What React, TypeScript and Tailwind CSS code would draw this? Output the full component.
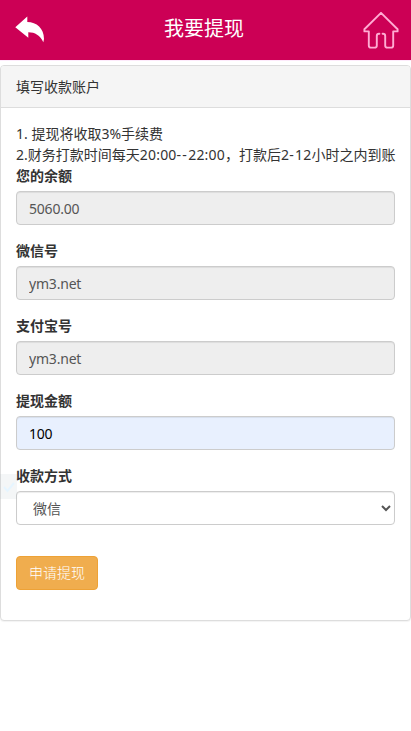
import { useState } from 'react';
import type { ReactNode } from 'react';
import clsx from 'clsx';

interface FieldProps {
  label: string;
  children: ReactNode;
}

interface TextFieldProps {
  label: string;
  value: string;
  readOnly?: boolean;
  onChange?: (value: string) => void;
}

const CONTROL =
  'block h-[34px] w-full rounded border border-[#ccc] text-sm shadow-[inset_0_1px_1px_rgba(0,0,0,0.075)] outline-none';

function BackIcon() {
  return (
    <svg className="h-7 w-[30px]" viewBox="0 0 30 28" fill="#fff">
      <path d="M.3 11.2 12.3 .6V6C21.6 6.1 29 12.2 29 22.9L28.3 26.2C25.2 19.4 19.6 16.2 13.3 16.3V21.8Z" />
    </svg>
  );
}

function HomeIcon() {
  return (
    <svg
      className="h-[38px] w-9"
      viewBox="0 0 36 38"
      fill="none"
      stroke="#ffacd3"
      strokeWidth="1.9"
      strokeLinejoin="round"
      strokeLinecap="round"
    >
      <path d="M18 1.9 1.4 18.2V20.4H5.8V34.4Q5.8 36.6 8 36.6H11.6Q13.8 36.6 13.8 34.4V25Q13.8 22.8 16 22.8H16.4M19.6 22.8H20Q22.2 22.8 22.2 25V34.4Q22.2 36.6 24.4 36.6H28Q30.2 36.6 30.2 34.4V20.4H34.6V18.2L18 1.9" />
    </svg>
  );
}

function Field({ label, children }: FieldProps) {
  return (
    <div className="mb-4">
      <label className="mb-[5px] block h-5 text-sm leading-5 font-bold">{label}</label>
      {children}
    </div>
  );
}

function TextField({ label, value, readOnly = false, onChange }: TextFieldProps) {
  return (
    <Field label={label}>
      <input
        className={clsx(
          CONTROL,
          'px-3 py-1.5',
          readOnly ? 'bg-[#eee] tracking-[-0.2px] text-[#555]' : 'bg-[#e8f0fe] tracking-[-0.3px] text-black',
        )}
        value={value}
        readOnly={readOnly}
        onChange={(e) => onChange?.(e.target.value)}
      />
    </Field>
  );
}

export default function App() {
  const [amount, setAmount] = useState('100');

  return (
    <div className="relative min-h-screen bg-white font-['Noto_Sans','Noto_Sans_CJK_SC',sans-serif] text-sm text-[#333]">
      <header className="flex h-[60px] items-center justify-between bg-[#cc0055] pr-3 pl-[15px]">
        <button className="w-9" aria-label="返回">
          <BackIcon />
        </button>
        <h1 className="mr-1.5 mb-[3px] text-xl leading-none text-white">我要提现</h1>
        <button className="w-9" aria-label="首页">
          <HomeIcon />
        </button>
      </header>
      <div className="h-px bg-[#fdeafb]" />

      <section className="mt-1 h-[556px] rounded border border-[#ddd] bg-white shadow-[0_1px_1px_rgba(0,0,0,0.05)]">
        <div className="h-[42px] rounded-t-[3px] border-b border-[#ddd] bg-[#f5f5f5] px-[15px] py-[11px] leading-5">
          填写收款账户
        </div>

        <div className="p-[15px]">
          <div className="h-[43px] leading-[21px] whitespace-nowrap">
            <p>1. 提现将收取3%手续费</p>
            <p>
              2.财务打款时间每天
              <span className="tracking-[0.2px]">
                20:00<span className="tracking-[1.3px]">--</span>22:00
              </span>
              ，打款后
              <span className="tracking-[0.2px]">
                2<span className="tracking-[1.3px]">-</span>12
              </span>
              小时之内到账
            </p>
          </div>

          <TextField label="您的余额" value="5060.00" readOnly />
          <TextField label="微信号" value="ym3.net" readOnly />
          <TextField label="支付宝号" value="ym3.net" readOnly />
          <TextField label="提现金额" value={amount} onChange={setAmount} />
          <Field label="收款方式">
            <select className={clsx(CONTROL, 'bg-white px-3 py-1.5 text-[#555]')}>
              <option>微信</option>
            </select>
          </Field>

          <button className="mt-[31px] block h-[34px] rounded border border-[#eea236] bg-[#f0ad4e] px-3 text-sm font-light text-white">
            申请提现
          </button>
        </div>
      </section>

      {/* Faded side tab */}
      <div className="pointer-events-none absolute top-[474px] left-0 flex h-[25px] w-[17px] items-center justify-center bg-[#a4b4c0]/12">
        <svg className="h-3 w-3" viewBox="0 0 12 12" fill="none" stroke="#e6f5ff" strokeWidth="2">
          <path d="m1 6 3.5 4L11 2" />
        </svg>
      </div>
    </div>
  );
}
